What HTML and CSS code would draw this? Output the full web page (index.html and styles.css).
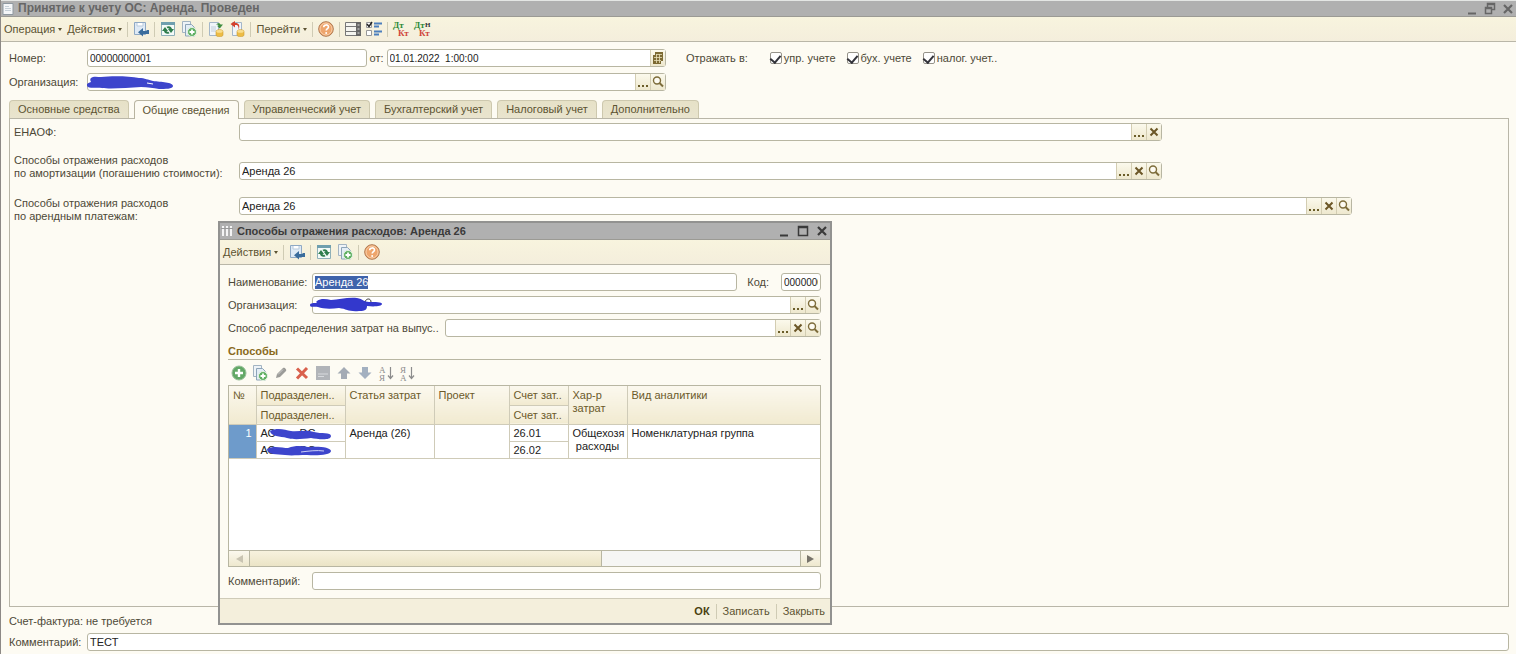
FILE: index.html
```html
<!DOCTYPE html>
<html lang="ru">
  <head>
    <meta charset="UTF-8" />
    <meta name="viewport" content="width=device-width, initial-scale=1.0" />
    <title>Принятие к учету ОС: Аренда. Проведен</title>
    <link rel="stylesheet" href="styles.css">
  </head>
  <body>
    <!-- Icon set -->
    <svg class="sprite" width="0" height="0" aria-hidden="true">
      <symbol id="i-save" viewBox="0 0 16 16">
        <path d="M1.500 1.500h11v12h-11z" fill="#dfeaf5" stroke="#8fa9c4" />
        <path d="M4 2v3h6V2" fill="#fff" stroke="#b9cbdd" />
        <path d="M16 9v4h-6v2.500L5 11.200 10 7v3h3.500V9z" fill="#3a6c9c" />
      </symbol>
      <symbol id="i-refresh" viewBox="0 0 16 16">
        <path d="M1.500 1.500h13v13h-13z" fill="#f4faf8" stroke="#8fb0b8" />
        <path d="M1 1h14v3H1z" fill="#6f9fae" />
        <path d="M2 10 5 6l3 4H6.500c.5.800 1.200 1 2 .8l1 1.400c-2.500 1.400-5 .3-5.500-2.200zM14 8l-3 4-3-4h1.500C9 7.200 8.300 7 7.500 7.200l-1-1.400C9 4.400 11.500 5.500 12 8z" fill="#2f7d4c" />
      </symbol>
      <symbol id="i-copy" viewBox="0 0 16 16">
        <path d="M1.500.5h8v11h-8z" fill="#eef3f7" stroke="#a3b4c2" />
        <path d="M4.500 3.500h6l3 3v8.500h-9z" fill="#e3edf5" stroke="#8da4b8" />
        <circle cx="11" cy="11" r="4.500" fill="#5faf62" stroke="#e5f2e4" />
        <path d="M11 8.500v5M8.500 11h5" stroke="#fff" stroke-width="1.800" />
      </symbol>
      <symbol id="i-post" viewBox="0 0 16 16">
        <path d="M1.500 1.500h9v13h-9z" fill="#f0f5fa" stroke="#a3b6c9" />
        <path d="M3 6h5M3 8h5M3 10h5" stroke="#c1cedb" />
        <path d="M8 3.500c2-2 4-1.500 4.500 0H15L11.800 7.500 9 4.800h1.800C10 3.500 9 3.300 8 3.500z" fill="#3f8d3f" />
        <path d="M8 10.500c0-2.500 7-2.500 7 0V14c0 2.300-7 2.300-7 0z" fill="#edbc45" stroke="#c99a33" stroke-width=".6" />
        <ellipse cx="11.500" cy="10.400" rx="3.200" ry="1.300" fill="#f9dd8d" />
      </symbol>
      <symbol id="i-unpost" viewBox="0 0 16 16">
        <path d="M3.500 1.500h9v13h-9z" fill="#f0f5fa" stroke="#a3b6c9" />
        <path d="M9.500 8.500C10 4.500 8 3.500 6 4v2.500L1.500 3 6 0v2c3.500-.3 5.500 2.500 3.500 6.500z" fill="#d3402e" />
        <path d="M8 10.500c0-2.500 7-2.500 7 0V14c0 2.300-7 2.300-7 0z" fill="#edbc45" stroke="#c99a33" stroke-width=".6" />
        <ellipse cx="11.500" cy="10.400" rx="3.200" ry="1.300" fill="#f9dd8d" />
      </symbol>
      <symbol id="i-help" viewBox="0 0 16 16">
        <circle cx="8" cy="8" r="7.300" fill="#eea56c" stroke="#ae7850" />
        <circle cx="8" cy="8" r="6" fill="none" stroke="#f9cfa9" />
        <path d="M5.700 6.200c0-3 4.800-3 4.800-.2 0 1.700-2.300 1.600-2.300 3.500" fill="none" stroke="#fff" stroke-width="1.600" />
        <circle cx="8.200" cy="12" r="1" fill="#fff" />
      </symbol>
      <symbol id="i-list" viewBox="0 0 16 16">
        <path d="M.5 1.500h15v13H.5z" fill="#f5f5f0" stroke="#777" />
        <path d="M1 5.500h11M1 10.500h11" stroke="#777" />
        <path d="M11 1h5v14h-5z" fill="#666" />
        <path d="M12.500 4h2M12.500 8h2M12.500 12h2" stroke="#ddd" />
      </symbol>
      <symbol id="i-checks" viewBox="0 0 16 16">
        <path d="M.5 1.500h5v5h-5zM.5 9.500h5v5h-5z" fill="#fff" stroke="#999" />
        <path d="M1 3l2 2.500L6 1" fill="none" stroke="#222" stroke-width="1.500" />
        <path d="M8 2.500h8M8 5.500h5M8 10.500h8M8 13.500h5" stroke="#4c7fbd" stroke-width="2" />
      </symbol>
      <symbol id="i-dots" viewBox="0 0 14 16">
        <path d="M2 11h2v2H2zM6 11h2v2H6zM10 11h2v2h-2z" fill="#6b5d29" />
      </symbol>
      <symbol id="i-clear" viewBox="0 0 14 16">
        <path d="M3.500 4.500l7 7M10.500 4.500l-7 7" stroke="#6b5626" stroke-width="2" />
      </symbol>
      <symbol id="i-find" viewBox="0 0 14 16">
        <circle cx="6" cy="6.500" r="3.500" fill="#fdfbf2" stroke="#7d6c3a" stroke-width="1.400" />
        <path d="M8.500 9l3.500 3.500" stroke="#7d6c3a" stroke-width="2" />
      </symbol>
      <symbol id="i-calendar" viewBox="0 0 14 16">
        <path d="M4 2h8v9h-2v3H2V5h2z" fill="#7d6a33" />
        <path d="M3 7.500h8M3 10.500h7M5.500 4v9M8.500 4v9M5 4.500h6" stroke="#e9dfb8" stroke-width=".8" />
      </symbol>
      <symbol id="i-add" viewBox="0 0 16 16">
        <circle cx="8" cy="8" r="7" fill="#62a866" stroke="#98bf98" />
        <path d="M8 4v8M4 8h8" stroke="#fff" stroke-width="2.400" />
      </symbol>
      <symbol id="i-edit" viewBox="0 0 16 16">
        <path d="M3 13l1-4 6-6c1.500-1 4 1.500 3 3l-6 6z" fill="#9b9b98" />
        <path d="M5 9.500l5-5" stroke="#ccc" />
      </symbol>
      <symbol id="i-delete" viewBox="0 0 16 16">
        <path d="M3 3.500l10 9.500M13 3L3 13.500" stroke="#d9604c" stroke-width="3" />
      </symbol>
      <symbol id="i-end" viewBox="0 0 16 16">
        <path d="M1 1h14v14H1z" fill="#b1b4b9" />
        <path d="M3 9h10M3 11.500h6" stroke="#d8dade" />
      </symbol>
      <symbol id="i-up" viewBox="0 0 16 16">
        <path d="M8 2l6.500 6.500H11V14H5V8.500H1.500z" fill="#a4abb5" />
      </symbol>
      <symbol id="i-down" viewBox="0 0 16 16">
        <path d="M8 14l6.500-6.500H11V2H5v5.500H1.500z" fill="#a3b0c0" />
      </symbol>
      <symbol id="i-sortarrow" viewBox="0 0 16 16">
        <path d="M12.500 2v11M10 10.500l2.500 3 2.500-3" fill="none" stroke="#8c8c8c" stroke-width="1.200" />
      </symbol>
      <symbol id="i-min" viewBox="0 0 14 14">
        <path d="M3 11.500h8" stroke="currentColor" stroke-width="2" />
      </symbol>
      <symbol id="i-restore" viewBox="0 0 14 14">
        <path d="M4.500 5V1.500h7v6H9M4 2.500h8M2.500 5.500h6v6h-6zM2 6.500h7" fill="none" stroke="currentColor" stroke-width="1.500" />
      </symbol>
      <symbol id="i-max" viewBox="0 0 14 14">
        <path d="M2.500 2.500h9v9h-9zM2 3.500h10" fill="none" stroke="currentColor" stroke-width="1.500" />
      </symbol>
      <symbol id="i-close" viewBox="0 0 14 14">
        <path d="M3 3l8 8M11 3l-8 8" stroke="currentColor" stroke-width="2.200" />
      </symbol>
    </svg>

    <main class="window">
      <header class="titlebar">
        <svg class="title-icon" viewBox="0 0 12 12"><path d="M1 .5h10v11H1z" fill="#f4f6f8" stroke="#8e98a0" /><path d="M3 3.500h4M3 5.500h6M3 7.500h6" stroke="#c6d0d8" /></svg>
        <h1>Принятие к учету ОС: Аренда. Проведен</h1>
        <button class="win-btn" aria-label="Свернуть"><svg><use href="#i-min" /></svg></button>
        <button class="win-btn" aria-label="Восстановить"><svg><use href="#i-restore" /></svg></button>
        <button class="win-btn" aria-label="Закрыть окно"><svg><use href="#i-close" /></svg></button>
      </header>

      <nav class="toolbar">
        <button class="menu-btn">Операция</button>
        <button class="menu-btn">Действия</button>
        <span class="sep"></span>
        <button class="icon-btn" aria-label="Записать"><svg><use href="#i-save" /></svg></button>
        <span class="sep"></span>
        <button class="icon-btn" aria-label="Обновить"><svg><use href="#i-refresh" /></svg></button>
        <button class="icon-btn" aria-label="Скопировать"><svg><use href="#i-copy" /></svg></button>
        <span class="sep"></span>
        <button class="icon-btn" aria-label="Провести"><svg><use href="#i-post" /></svg></button>
        <button class="icon-btn" aria-label="Отменить проведение"><svg><use href="#i-unpost" /></svg></button>
        <span class="sep"></span>
        <button class="menu-btn">Перейти</button>
        <span class="sep"></span>
        <button class="icon-btn" aria-label="Справка"><svg><use href="#i-help" /></svg></button>
        <span class="sep"></span>
        <button class="icon-btn" aria-label="Список"><svg><use href="#i-list" /></svg></button>
        <button class="icon-btn" aria-label="Настройка"><svg><use href="#i-checks" /></svg></button>
        <span class="sep"></span>
        <button class="icon-btn" aria-label="Проводки">
          <svg viewBox="0 0 16 16" class="dtkt"><text x="0" y="7" fill="#2f8a38">Дт</text><text x="5" y="15" fill="#d0453c">Кт</text></svg>
        </button>
        <button class="icon-btn" aria-label="Проводки налоговые">
          <svg viewBox="0 0 16 16" class="dtkt"><text x="0" y="7" fill="#2f8a38">Дт</text><text x="5" y="15" fill="#d0453c">Кт</text><text x="11" y="6" fill="#333" class="dtkt-n">Н</text></svg>
        </button>
      </nav>

      <div class="form">
        <div class="form-row">
          <div class="head-fields">
            <label class="label" for="number">Номер:</label>
            <div class="field"><input id="number" class="digits" value="00000000001" /></div>
            <label class="label-from" for="date">от:</label>
            <div class="field">
              <input id="date" class="digits" value="01.01.2022  1:00:00" />
              <button aria-label="Календарь"><svg><use href="#i-calendar" /></svg></button>
            </div>
          </div>
          <div class="reflect">
            <span class="reflect-label">Отражать в:</span>
            <label class="check"><input type="checkbox" checked />упр. учете</label>
            <label class="check"><input type="checkbox" checked />бух. учете</label>
            <label class="check"><input type="checkbox" checked />налог. учет..</label>
          </div>
        </div>
        <div class="form-row">
          <div class="head-fields">
            <label class="label" for="org">Организация:</label>
            <div class="field">
              <input id="org" value="" />
              <svg class="scribble scribble-main" viewBox="0 0 88 16"><path d="M4 3c2-2 7-1 10-1 10-1 28-1 38 1 6 0 9 2 14 3 8 1 20 1 20 5 0 3-8 3-14 3-6-1-11-2-18-2-14 1-31 2-39 1-6-1-13 1-15-2-1-2 1-3 4-4-1-2-1-3 0-4z" fill="#3d45cc" /><path d="M60 8l6 1" stroke="#fff" /></svg>
              <button aria-label="Выбрать"><svg><use href="#i-dots" /></svg></button>
              <button aria-label="Открыть"><svg><use href="#i-find" /></svg></button>
            </div>
          </div>
        </div>

        <div class="tabs" role="tablist">
          <button class="tab" role="tab">Основные средства</button>
          <button class="tab active" role="tab" aria-selected="true">Общие сведения</button>
          <button class="tab" role="tab">Управленческий учет</button>
          <button class="tab" role="tab">Бухгалтерский учет</button>
          <button class="tab" role="tab">Налоговый учет</button>
          <button class="tab" role="tab">Дополнительно</button>
        </div>
        <section class="panel">
          <div class="panel-row">
            <label for="enaof">ЕНАОФ:</label>
            <div class="field">
              <input id="enaof" value="" />
              <button aria-label="Выбрать"><svg><use href="#i-dots" /></svg></button>
              <button aria-label="Очистить"><svg><use href="#i-clear" /></svg></button>
            </div>
          </div>
          <div class="panel-row panel-row-low">
            <label for="amort">Способы отражения расходов<br />по амортизации (погашению стоимости):</label>
            <div class="field">
              <input id="amort" value="Аренда 26" />
              <button aria-label="Выбрать"><svg><use href="#i-dots" /></svg></button>
              <button aria-label="Очистить"><svg><use href="#i-clear" /></svg></button>
              <button aria-label="Открыть"><svg><use href="#i-find" /></svg></button>
            </div>
          </div>
          <div class="panel-row panel-row-high">
            <label for="rent">Способы отражения расходов<br />по арендным платежам:</label>
            <div class="field field-wide">
              <input id="rent" value="Аренда 26" />
              <button aria-label="Выбрать"><svg><use href="#i-dots" /></svg></button>
              <button aria-label="Очистить"><svg><use href="#i-clear" /></svg></button>
              <button aria-label="Открыть"><svg><use href="#i-find" /></svg></button>
            </div>
          </div>
        </section>

        <p class="invoice">Счет-фактура: не требуется</p>
        <div class="comment-row">
          <label class="label" for="comment">Комментарий:</label>
          <div class="field"><input id="comment" value="ТЕСТ" /></div>
        </div>
      </div>
    </main>

    <!-- Окно способа отражения расходов -->
    <section class="dialog" role="dialog" aria-labelledby="dialog-title">
      <header class="titlebar">
        <svg class="title-icon" viewBox="0 0 12 12"><path d="M1 1h2v10H1zM5 1h2v10H5zM9 1h2v10H9z" fill="#f4f4f4" /><path d="M0 3.500h12" stroke="#999" /></svg>
        <h2 id="dialog-title">Способы отражения расходов: Аренда 26</h2>
        <button class="win-btn" aria-label="Свернуть"><svg><use href="#i-min" /></svg></button>
        <button class="win-btn" aria-label="Развернуть"><svg><use href="#i-max" /></svg></button>
        <button class="win-btn" aria-label="Закрыть окно"><svg><use href="#i-close" /></svg></button>
      </header>
      <nav class="toolbar">
        <button class="menu-btn">Действия</button>
        <span class="sep"></span>
        <button class="icon-btn" aria-label="Записать"><svg><use href="#i-save" /></svg></button>
        <span class="sep"></span>
        <button class="icon-btn" aria-label="Обновить"><svg><use href="#i-refresh" /></svg></button>
        <button class="icon-btn" aria-label="Скопировать"><svg><use href="#i-copy" /></svg></button>
        <span class="sep"></span>
        <button class="icon-btn" aria-label="Справка"><svg><use href="#i-help" /></svg></button>
      </nav>

      <div class="dialog-body">
        <div class="dialog-row">
          <label class="label" for="d-name">Наименование:</label>
          <div class="field"><input id="d-name" value="Аренда 26" /></div>
          <label class="label-code" for="d-code">Код:</label>
          <div class="field field-code"><input id="d-code" class="digits" value="000000001" /></div>
        </div>
        <div class="dialog-row">
          <label class="label" for="d-org">Организация:</label>
          <div class="field">
            <input id="d-org" value="" />
            <svg class="scribble scribble-org" viewBox="0 0 74 16"><path d="M55 5c1-4 6-4 6 0" fill="none" stroke="#333" /><path d="M7 4c4-3 9-2 14-1 8 0 16-3 26-2 6 1 7 4 12 4 6 0 13 0 13 2s-7 3-15 2c0 3-1 5-8 5-10 1-12-2-20-3-8 1-16 1-21-1-4-1-8 1-8-2 0-2 4-2 7-2-1-1-1-1 0-2z" fill="#3338cc" /></svg>
            <button aria-label="Выбрать"><svg><use href="#i-dots" /></svg></button>
            <button aria-label="Открыть"><svg><use href="#i-find" /></svg></button>
          </div>
        </div>
        <div class="dialog-row">
          <label class="label-long" for="d-way">Способ распределения затрат на выпус..</label>
          <div class="field">
            <input id="d-way" value="" />
            <button aria-label="Выбрать"><svg><use href="#i-dots" /></svg></button>
            <button aria-label="Очистить"><svg><use href="#i-clear" /></svg></button>
            <button aria-label="Открыть"><svg><use href="#i-find" /></svg></button>
          </div>
        </div>

        <h3 class="group-title">Способы</h3>
        <div class="table-tools">
          <button class="icon-btn" aria-label="Добавить"><svg><use href="#i-add" /></svg></button>
          <button class="icon-btn" aria-label="Скопировать строку"><svg><use href="#i-copy" /></svg></button>
          <button class="icon-btn" aria-label="Изменить"><svg><use href="#i-edit" /></svg></button>
          <button class="icon-btn" aria-label="Удалить"><svg><use href="#i-delete" /></svg></button>
          <button class="icon-btn" aria-label="Завершить"><svg><use href="#i-end" /></svg></button>
          <button class="icon-btn" aria-label="Вверх"><svg><use href="#i-up" /></svg></button>
          <button class="icon-btn" aria-label="Вниз"><svg><use href="#i-down" /></svg></button>
          <button class="icon-btn" aria-label="По возрастанию"><svg viewBox="0 0 16 16" class="sort"><text x="1" y="8">А</text><text x="1" y="16">Я</text><use href="#i-sortarrow" /></svg></button>
          <button class="icon-btn" aria-label="По убыванию"><svg viewBox="0 0 16 16" class="sort"><text x="1" y="8">Я</text><text x="1" y="16">А</text><use href="#i-sortarrow" /></svg></button>
        </div>

        <div class="grid-box">
          <table class="grid">
            <colgroup>
              <col class="col-num" />
              <col class="col-dept" />
              <col class="col-dept" />
              <col class="col-project" />
              <col class="col-acc" />
              <col class="col-acc" />
              <col />
            </colgroup>
            <thead>
              <tr>
                <th rowspan="2">№</th>
                <th>Подразделен..</th>
                <th rowspan="2">Статья затрат</th>
                <th rowspan="2">Проект</th>
                <th>Счет зат..</th>
                <th rowspan="2">Хар-р затрат</th>
                <th rowspan="2" class="last">Вид аналитики</th>
              </tr>
              <tr>
                <th>Подразделен..</th>
                <th>Счет зат..</th>
              </tr>
            </thead>
            <tbody>
              <tr>
                <td rowspan="2" class="num">1</td>
                <td class="masked"><span>АС</span><span>DC</span>
                  <svg class="scribble scribble-cell" viewBox="0 0 66 12"><path d="M4 3c8-4 15-1 21 0 8 1 15-2 23 1 7 2 17 0 17 4 0 5-14 3-20 2-9 1-17 2-24 0C14 8 5 9 4 3z" fill="#3d45cc" /></svg>
                </td>
                <td rowspan="2">Аренда (26)</td>
                <td rowspan="2"></td>
                <td>26.01</td>
                <td rowspan="2" class="wrap">Общехозя<br />расходы</td>
                <td rowspan="2" class="last">Номенклатурная группа</td>
              </tr>
              <tr>
                <td class="masked"><span>АС</span><span>DC</span>
                  <svg class="scribble scribble-cell" viewBox="0 0 66 12"><path d="M1 4c6-4 16-1 21-1 8-3 14-2 20-1 10-1 23 0 23 4s-14 5-24 4c-10 0-15 1-22 0C11 9 1 10 1 4z" fill="#3d45cc" /><path d="M35 7c8-1 16-2 23-1" fill="none" stroke="#cdd0f5" /></svg>
                </td>
                <td>26.02</td>
              </tr>
            </tbody>
          </table>
          <div class="scroll">
            <button class="scroll-left" aria-label="Влево"></button>
            <div class="scroll-thumb"></div>
            <div class="scroll-track"></div>
            <button class="scroll-right" aria-label="Вправо"></button>
          </div>
        </div>

        <div class="dialog-row dialog-comment">
          <label class="label" for="d-comment">Комментарий:</label>
          <div class="field"><input id="d-comment" value="" /></div>
        </div>
      </div>

      <footer class="dialog-footer">
        <button class="ok">ОК</button>
        <span class="sep"></span>
        <button>Записать</button>
        <span class="sep"></span>
        <button>Закрыть</button>
      </footer>
    </section>

    <script>
      // При открытии окна наименование выделено
      document.getElementById("d-name").select();
    </script>
  </body>
</html>
```
FILE: styles.css
```css
* {
  margin: 0;
  padding: 0;
  box-sizing: border-box;
}

body {
  font-family: "Liberation Sans", Arial, sans-serif;
  font-size: 11px;
  line-height: 13px;
  color: #4d4937;
  background: #fdfbf3;
}

button,
input {
  font: inherit;
  color: inherit;
  border: none;
  background: none;
  outline: none;
}

button {
  white-space: nowrap;
}

.sprite {
  position: absolute;
}

.window {
  min-height: 100vh;
  display: flex;
  flex-direction: column;
  border-left: 1px solid #8d8986;
}

/* Title bar */
.titlebar {
  display: flex;
  align-items: center;
  gap: 4px;
  height: 17px;
  padding: 0 1px;
  background: #b0b0b0;
  border-top: 1px solid #e4e6e4;
  border-bottom: 1px solid #9b9a94;
  color: #666;
}

.titlebar h1,
.titlebar h2 {
  flex: 1;
  font-size: 12px;
  font-weight: bold;
  white-space: nowrap;
}

.titlebar h2 {
  font-size: 11px;
}

.title-icon {
  width: 12px;
  height: 12px;
}

.win-btn {
  width: 14px;
  height: 14px;
}

.win-btn svg {
  display: block;
  width: 14px;
  height: 14px;
}

/* Toolbar */
.toolbar {
  display: flex;
  align-items: center;
  gap: 5px;
  height: 25px;
  padding: 0 3px;
  background: linear-gradient(#f8f4de, #f4eedc);
  border-bottom: 1px solid #b9b6a8;
  color: #5c5332;
}

.menu-btn {
  display: flex;
  align-items: center;
  gap: 3px;
}

.menu-btn::after {
  content: "";
  border: 2px solid transparent;
  border-top: 3px solid #5c5332;
  border-bottom: none;
}

.icon-btn,
.icon-btn svg {
  display: block;
  width: 16px;
  height: 16px;
  overflow: visible;
}

.sep {
  width: 1px;
  height: 15px;
  background: #cfcbb4;
}

.dtkt text {
  font-family: "Liberation Serif", serif;
  font-size: 9px;
  font-weight: bold;
}

.dtkt .dtkt-n {
  font-size: 7px;
}

/* Form */
.form {
  flex: 1;
  display: flex;
  flex-direction: column;
  padding: 7px 7px 3px 8px;
}

.form-row {
  display: flex;
  align-items: center;
  margin-bottom: 6px;
}

.head-fields {
  display: flex;
  align-items: center;
  width: 43.8%;
}

.label {
  width: 78px;
  flex: none;
}

.label-from {
  padding: 0 3px;
}

.field {
  position: relative;
  flex: 1;
  min-width: 0;
  display: flex;
  height: 18px;
  background: #fff;
  border: 1px solid #b8b6a2;
  border-radius: 3px;
}

.field input {
  flex: 1;
  width: 0;
  min-width: 0;
  padding: 0 2px;
  color: #222;
}

.field .digits {
  font-size: 10px;
  white-space: pre;
}

.field button {
  width: 15px;
  background: linear-gradient(#fbf9ec, #eee8ce);
  border-left: 1px solid #d3cdb2;
}

.field button svg {
  display: block;
  width: 14px;
  height: 16px;
}

.field ::selection {
  background: #3f63ab;
  color: #fff;
}

.reflect {
  display: flex;
  align-items: center;
  padding-left: 20px;
  gap: 11px;
}

.reflect-label {
  padding-right: 11px;
}

.check {
  display: flex;
  align-items: center;
  gap: 2px;
}

.check input {
  appearance: none;
  width: 12px;
  height: 12px;
  display: grid;
  place-items: center;
  background: #fff;
  border: 1px solid #96938a;
  border-radius: 2px;
}

.check input:checked::after {
  content: "";
  width: 5px;
  height: 8px;
  margin-bottom: 2px;
  border: solid #33333a;
  border-width: 0 2px 2px 0;
  transform: rotate(40deg);
}

/* Tabs */
.tabs {
  display: flex;
  align-items: flex-end;
  gap: 5px;
  padding-top: 3px;
}

.tab {
  height: 18px;
  padding: 0 8px;
  background: linear-gradient(#e6e1c7, #e9e4ce);
  border: 1px solid #cdc8ae;
  border-bottom: none;
  border-radius: 4px 4px 0 0;
  color: #5c5332;
}

.tab.active {
  position: relative;
  height: 19px;
  margin-bottom: -1px;
  background: #fdfbf3;
  border-color: #b8b4a0;
}

.panel {
  flex: 1;
  padding: 4px;
  border: 1px solid #b9b6a8;
}

.panel-row {
  display: grid;
  grid-template-columns: 225px 1fr;
  align-items: center;
}

.panel-row .field {
  width: 73%;
}

.panel-row .field-wide {
  width: 88%;
}

.panel-row-low {
  align-items: end;
  margin: 13px 0 17px;
}

.panel-row-high {
  align-items: start;
}

.invoice {
  padding: 8px 0 5px;
}

.comment-row {
  display: flex;
  align-items: center;
}

/* Dialog */
.dialog {
  position: absolute;
  left: 218px;
  top: 221px;
  width: 614px;
  background: #fdfbf3;
  border: 2px solid #929290;
}

.dialog .titlebar {
  border-top: none;
  color: #3a3a3a;
}

.dialog .win-btn {
  margin-left: 1px;
}

.dialog-body {
  padding: 8px 9px 8px 8px;
}

.dialog-row {
  display: flex;
  align-items: center;
  margin-bottom: 5px;
}

.dialog-row .label {
  width: 84px;
}

.label-code {
  padding: 0 12px 0 10px;
}

.dialog-row .field-code {
  flex: none;
  width: 40px;
}

.label-long {
  padding-right: 6px;
  white-space: nowrap;
}

.group-title {
  margin-top: 8px;
  padding-bottom: 1px;
  font-size: 11px;
  color: #8a6a1c;
  border-bottom: 1px solid #b8b6a2;
}

.table-tools {
  display: flex;
  gap: 5px;
  padding: 5px 3px 4px;
}

.sort text {
  font-family: "Liberation Serif", serif;
  font-size: 9px;
  fill: #8c8c8c;
}

.grid-box {
  display: flex;
  flex-direction: column;
  min-height: 182px;
  background: #fff;
  border: 1px solid #b8b6a2;
}

.grid {
  width: 100%;
  table-layout: fixed;
  border-collapse: collapse;
}

.col-num {
  width: 27px;
}

.col-dept {
  width: 89px;
}

.col-project {
  width: 75px;
}

.col-acc {
  width: 59px;
}

.grid th,
.grid td {
  padding: 2px 4px 0;
  height: 17px;
  text-align: left;
  vertical-align: top;
  font-weight: normal;
  border-right: 1px solid #cfcbb8;
  border-bottom: 1px solid #cfcbb8;
}

.grid .last {
  border-right: none;
}

.grid th {
  height: 19px;
  padding-top: 3px;
  color: #6b5a2b;
  white-space: nowrap;
  background: linear-gradient(#fbf8ee, #f1ead0);
}

.grid th[rowspan] {
  white-space: normal;
}

.grid td {
  color: #222;
  white-space: nowrap;
}

.grid .num {
  text-align: right;
  color: #fff;
  background: #6e9bcb;
}

.grid .wrap {
  text-align: center;
}

.masked {
  position: relative;
}

.masked span + span {
  margin-left: 24px;
}

/* Закрашенные названия */
.scribble {
  position: absolute;
}

.scribble-main {
  left: -1px;
  top: 1px;
  width: 88px;
  height: 16px;
}

.scribble-org {
  left: -3px;
  top: 0;
  width: 74px;
  height: 16px;
}

.scribble-cell {
  left: 9px;
  top: 3px;
  width: 66px;
  height: 12px;
}

.scroll {
  display: flex;
  height: 16px;
  margin-top: auto;
  border-top: 1px solid #b8b6a2;
  background: #f6f6f4;
}

.scroll button {
  width: 20px;
  display: grid;
  place-items: center;
  background: linear-gradient(#fbf8ee, #eee8ce);
}

.scroll button::after {
  content: "";
  border: 4px solid transparent;
}

.scroll .scroll-left::after {
  border-right: 7px solid #c9c4b2;
  border-left: none;
}

.scroll .scroll-right {
  border-left: 1px solid #b8b6a2;
}

.scroll .scroll-right::after {
  border-left: 7px solid #77736a;
  border-right: none;
}

.scroll-thumb {
  flex: 353;
  background: linear-gradient(#f7f2de, #ebe4c6);
  border: solid #b8b6a2;
  border-width: 0 1px;
}

.scroll-track {
  flex: 199;
}

.dialog-comment {
  margin: 5px 0 0;
}

.dialog-footer {
  display: flex;
  align-items: center;
  justify-content: flex-end;
  gap: 6px;
  height: 25px;
  padding: 0 5px;
  background: #f4efdc;
  border-top: 1px solid #cfcbb8;
  color: #5c5332;
}

.dialog-footer .ok {
  font-weight: bold;
  color: #4a3f10;
}
```
